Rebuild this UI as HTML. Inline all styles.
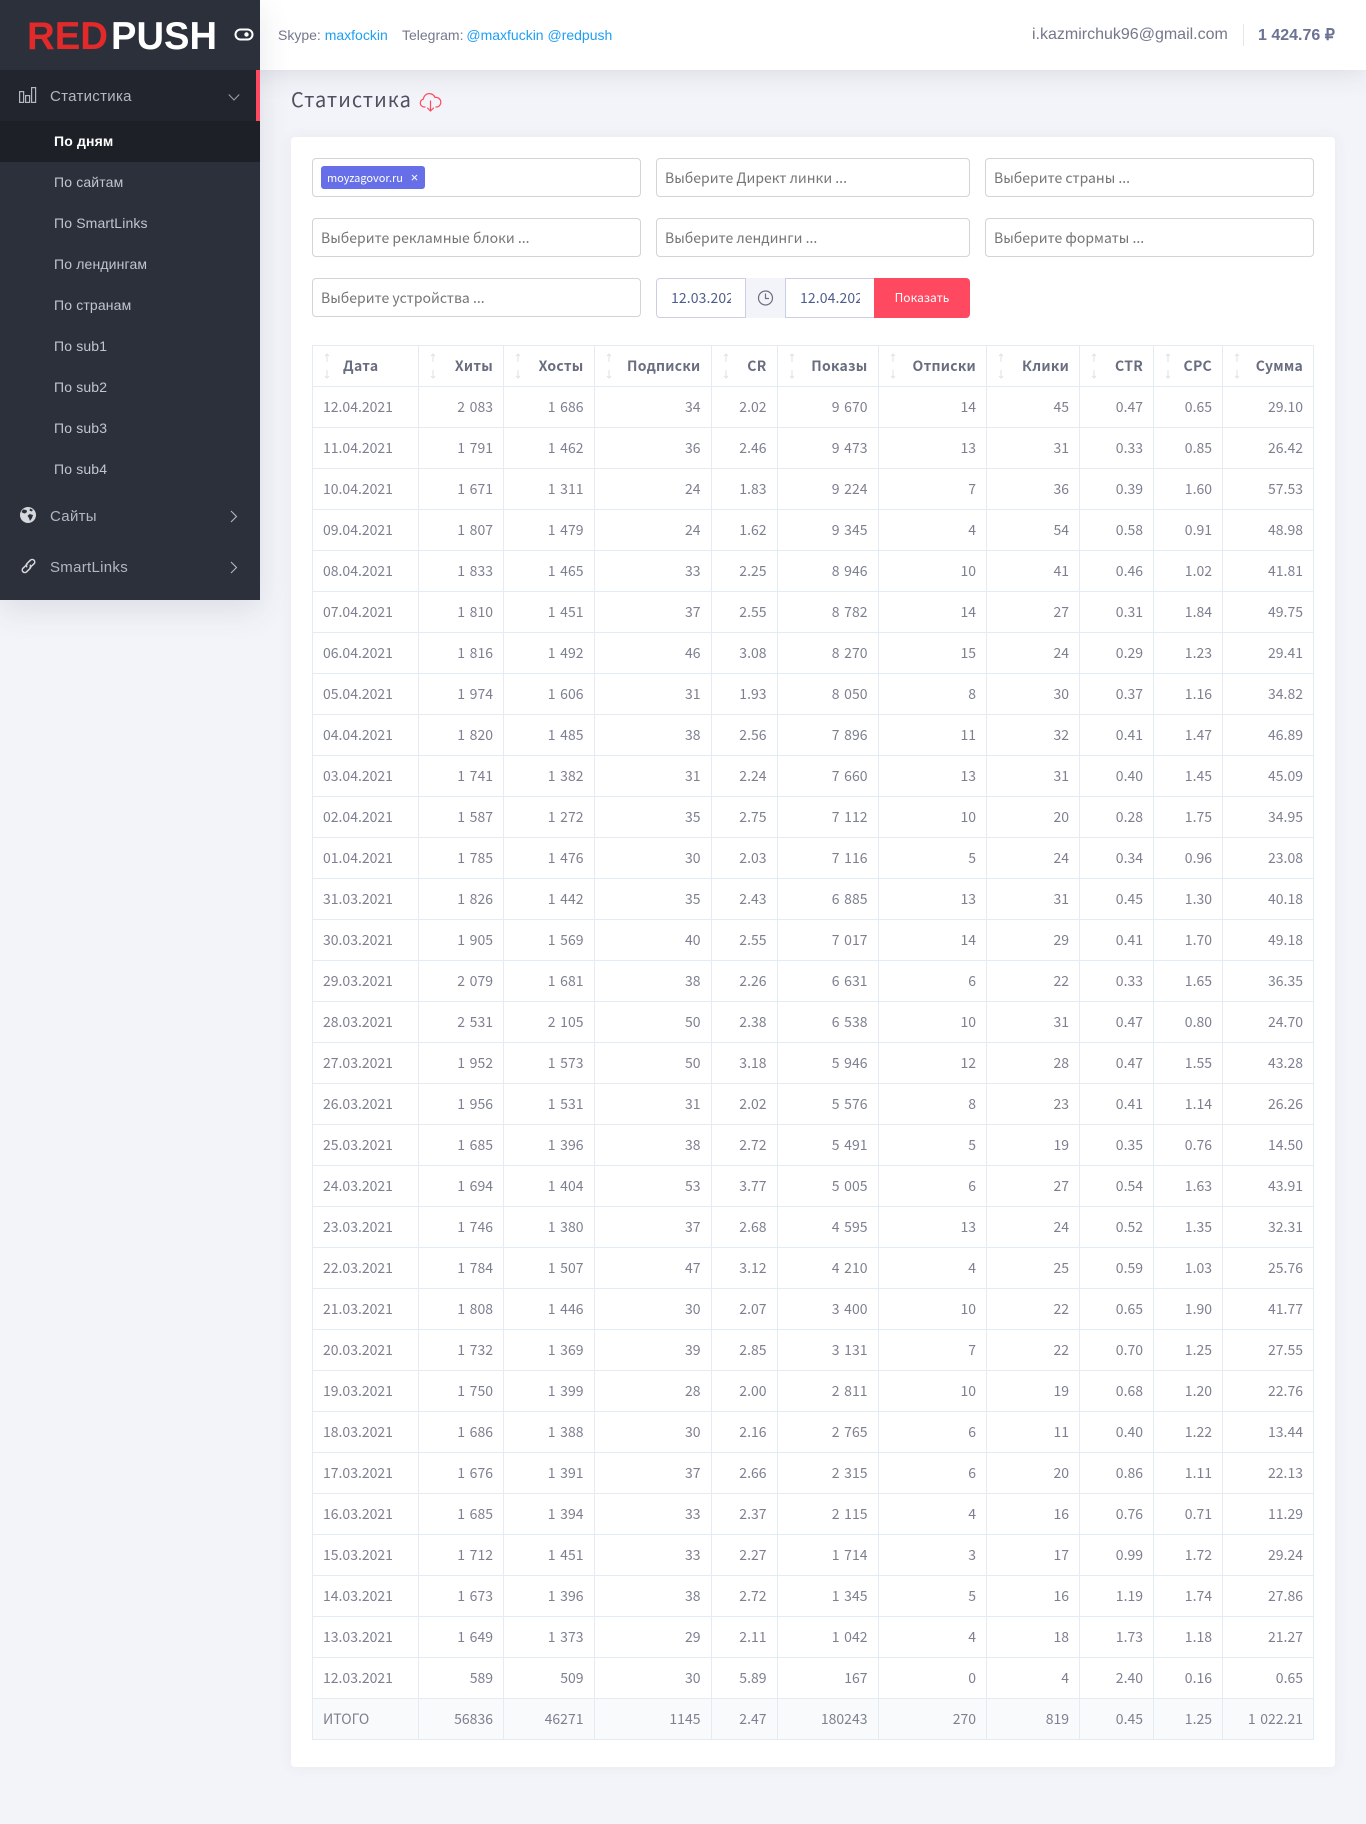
<!DOCTYPE html>
<html lang="ru"><head><meta charset="utf-8"><title>Статистика</title>
<style>
*{box-sizing:border-box}
html,body{margin:0;padding:0}
body{width:1366px;height:1824px;position:relative;overflow:hidden;background:#f3f4f9;font-family:"Liberation Sans",sans-serif}
.a{position:absolute;white-space:nowrap}
.top{left:0;top:0;width:1366px;height:70px;background:#fff;box-shadow:0 0 30px rgba(60,65,90,.16)}
.side{left:0;top:0;width:260px;height:600px;background:#2c303b;box-shadow:0 10px 30px rgba(60,65,90,.12)}
.sub{left:0;width:260px;height:41px;line-height:41px;padding-left:54px;font-size:14px;letter-spacing:.15px;color:#c2c5cc}
.main{left:50px;font-size:15px;letter-spacing:.3px;color:#b4b7c0;line-height:20px}
.card{left:291px;top:137px;width:1044px;height:1630px;background:#fff;border-radius:4px;box-shadow:0 0 15px rgba(60,65,90,.06)}
.n{font-family:"Noto Sans CJK JP","Liberation Sans",sans-serif}
.inp{height:39px;border:1px solid #d4d4d4;border-radius:4px;background:#fff;color:#757575;font-size:14px;line-height:39px;padding-left:8px;font-family:"Noto Sans CJK JP","Liberation Sans",sans-serif}
table{position:absolute;left:312px;top:345px;width:1001px;border-collapse:collapse;table-layout:fixed;font-family:"Noto Sans CJK JP","Liberation Sans",sans-serif;font-size:14px;color:#7d8090;word-spacing:1.5px}
th,td{border:1px solid #e3ebf3;height:41px;padding:0 10px 0 10px;text-align:right;white-space:nowrap;font-weight:400}
td:first-child{text-align:left}
th{position:relative;font-weight:700;color:#696d80;letter-spacing:.25px}
th:first-child{text-align:left;padding-left:30px}
th svg{position:absolute;left:10px;top:7px}
tr.t td{background:#f8fafc}
</style></head><body>
<div class="a top"></div>
<div class="a" style="left:278px;top:26px;font-size:14px;line-height:18px;color:#74788d">Skype: <span style="color:#1e9ff2">maxfockin</span></div>
<div class="a" style="left:402px;top:26px;font-size:14px;line-height:18px;color:#74788d">Telegram: <span style="color:#1e9ff2;margin-left:-1px">@maxfuckin @redpush</span></div>
<div class="a" style="left:1032px;top:26px;font-size:16px;line-height:18px;color:#74788d">i.kazmirchuk96@gmail.com</div>
<div class="a" style="left:1243px;top:24px;width:1px;height:22px;background:#e4e6ea"></div>
<div class="a" style="left:1258px;top:27px;font-size:16px;line-height:18px;font-weight:700;color:#6c7293">1 424.76 ₽</div>

<div class="a side"></div>
<svg class="a" style="left:0;top:0" width="260" height="70"><text x="27" y="49" font-family="Liberation Sans" font-weight="700" font-size="39" fill="#e22a2a" textLength="81" lengthAdjust="spacingAndGlyphs">RED</text><text x="111" y="49" font-family="Liberation Sans" font-weight="700" font-size="39" fill="#fff" textLength="106" lengthAdjust="spacingAndGlyphs">PUSH</text><rect x="235.5" y="29.5" width="17" height="10" rx="5" fill="none" stroke="#fff" stroke-width="2"/><circle cx="246.5" cy="34.5" r="2.2" fill="#fff"/></svg>
<div class="a" style="left:0;top:70px;width:260px;height:51px;background:#22252e"></div>
<div class="a" style="left:256px;top:70px;width:4px;height:51px;background:#ff4961"></div>
<svg class="a" style="left:19px;top:87px" width="18" height="16" fill="none" stroke="#b4b7c0" stroke-width="1.2"><rect x=".6" y="4.6" width="4" height="10.8"/><rect x="6.600" y="8.600" width="4" height="6.800"/><rect x="12.600" y=".6" width="4" height="14.800"/></svg>
<div class="a main" style="top:87px">Статистика</div>
<svg class="a" style="left:228px;top:93px" width="12" height="9" fill="none" stroke="#9a9da8" stroke-width="1.1"><path d="M.8 1.5 6 7l5.2-5.5"/></svg>
<div class="a" style="left:0;top:121px;width:260px;height:41px;background:#1e2028"></div>
<div class="a sub" style="top:121px;color:#fff;font-weight:700">По дням</div>
<div class="a sub" style="top:162px">По сайтам</div>
<div class="a sub" style="top:203px">По SmartLinks</div>
<div class="a sub" style="top:244px">По лендингам</div>
<div class="a sub" style="top:285px">По странам</div>
<div class="a sub" style="top:326px">По sub1</div>
<div class="a sub" style="top:367px">По sub2</div>
<div class="a sub" style="top:408px">По sub3</div>
<div class="a sub" style="top:449px">По sub4</div>
<svg class="a" style="left:20px;top:507px" width="16" height="16"><circle cx="8" cy="8" r="8" fill="#d6d8dd"/><path d="M3 2.500 6.500 3 7 5 5 6.500 3 6 1.500 5ZM9.500 7l3.500 1-1 3-2 3-1-3-1.500-2ZM10 1.500l3 1.500-1.500 1.500-2-1Z" fill="#2c303b"/></svg>
<div class="a main" style="top:507px">Сайты</div>
<svg class="a" style="left:230px;top:510px" width="8" height="13" fill="none" stroke="#b4b7c0" stroke-width="1.1"><path d="M1 1l5.500 5.500L1 12"/></svg>
<svg class="a" style="left:20px;top:558px" width="17" height="16" fill="none" stroke="#d6d8dd" stroke-width="1.5" stroke-linecap="round"><path d="M7 6.500 3 10.200a2.500 2.500 0 0 0 3.600 3.600L10 10.500a2.600 2.600 0 0 0 .3-3.200"/><path d="M10 9.500l4-3.700a2.500 2.500 0 0 0-3.600-3.600L7 5.500a2.600 2.600 0 0 0-.3 3.200"/></svg>
<div class="a main" style="top:558px">SmartLinks</div>
<svg class="a" style="left:230px;top:561px" width="8" height="13" fill="none" stroke="#b4b7c0" stroke-width="1.1"><path d="M1 1l5.500 5.500L1 12"/></svg>

<div class="a n" style="left:291px;top:85px;font-size:20px;line-height:28px;letter-spacing:1px;color:#4f5160">Статистика</div>
<svg class="a" style="left:419px;top:92px" width="23" height="20" fill="none" stroke="#ff4961" stroke-width="1.2" stroke-linecap="round" stroke-linejoin="round"><path d="M6 15H5a4 4 0 0 1-.6-7.900A6 6 0 0 1 16 5.500a4.800 4.800 0 0 1 2 9.500h-1"/><path d="M11.500 9v10M8.500 16l3 3 3-3"/></svg>

<div class="a card"></div>
<div class="a inp" style="left:312px;top:158px;width:329px"></div>
<div class="a n" style="left:321px;top:166px;width:104px;height:23px;background:#666ee8;border-radius:3px;color:#fff;font-size:11px;line-height:24px;padding-left:6px">moyzagovor.ru<span style="position:absolute;left:89px;top:0;font-size:9px;font-weight:700">×</span></div>
<div class="a inp" style="left:656px;top:158px;width:314px">Выберите Директ линки ...</div>
<div class="a inp" style="left:985px;top:158px;width:329px">Выберите страны ...</div>
<div class="a inp" style="left:312px;top:218px;width:329px">Выберите рекламные блоки ...</div>
<div class="a inp" style="left:656px;top:218px;width:314px">Выберите лендинги ...</div>
<div class="a inp" style="left:985px;top:218px;width:329px">Выберите форматы ...</div>
<div class="a inp" style="left:312px;top:278px;width:329px">Выберите устройства ...</div>
<div class="a" style="left:656px;top:278px;width:90px;height:40px;border:1px solid #cacfe7;border-radius:4px 0 0 4px;background:#fff"></div>
<div class="a n" style="left:671px;top:287px;width:60px;height:22px;overflow:hidden;font-size:14px;letter-spacing:.1px;line-height:22px;color:#4e5c8c">12.03.2021</div>
<div class="a" style="left:746px;top:278px;width:39px;height:40px;background:#f3f4f9;border-bottom:1px solid #f3f4f9"></div>
<svg class="a" style="left:757px;top:290px" width="17" height="17" fill="none" stroke="#6b6f82" stroke-width="1.200"><circle cx="8.500" cy="8" r="7"/><path d="M8.500 3.500V8.500H12"/></svg>
<div class="a" style="left:785px;top:278px;width:89px;height:40px;border:1px solid #cacfe7;border-right:0;background:#fff"></div>
<div class="a n" style="left:800px;top:287px;width:60px;height:22px;overflow:hidden;font-size:14px;letter-spacing:.1px;line-height:22px;color:#4e5c8c">12.04.2021</div>
<div class="a n" style="left:874px;top:278px;width:96px;height:40px;background:#ff4961;border-radius:0 4px 4px 0;color:#fff;font-size:12px;line-height:40px;text-align:center">Показать</div>

<table>
<colgroup><col style="width:106px"><col style="width:85px"><col style="width:90.500px"><col style="width:117px"><col style="width:66px"><col style="width:101px"><col style="width:108.500px"><col style="width:93px"><col style="width:74px"><col style="width:69px"><col style="width:91px"></colgroup>
<tr><th><svg width="8" height="26" fill="none" stroke="#dfe2e8"><path d="M4 9V1M2 3l2-2 2 2M4 17v8M2 23l2 2 2-2"/></svg>Дата<th><svg width="8" height="26" fill="none" stroke="#dfe2e8"><path d="M4 9V1M2 3l2-2 2 2M4 17v8M2 23l2 2 2-2"/></svg>Хиты<th><svg width="8" height="26" fill="none" stroke="#dfe2e8"><path d="M4 9V1M2 3l2-2 2 2M4 17v8M2 23l2 2 2-2"/></svg>Хосты<th><svg width="8" height="26" fill="none" stroke="#dfe2e8"><path d="M4 9V1M2 3l2-2 2 2M4 17v8M2 23l2 2 2-2"/></svg>Подписки<th><svg width="8" height="26" fill="none" stroke="#dfe2e8"><path d="M4 9V1M2 3l2-2 2 2M4 17v8M2 23l2 2 2-2"/></svg>CR<th><svg width="8" height="26" fill="none" stroke="#dfe2e8"><path d="M4 9V1M2 3l2-2 2 2M4 17v8M2 23l2 2 2-2"/></svg>Показы<th><svg width="8" height="26" fill="none" stroke="#dfe2e8"><path d="M4 9V1M2 3l2-2 2 2M4 17v8M2 23l2 2 2-2"/></svg>Отписки<th><svg width="8" height="26" fill="none" stroke="#dfe2e8"><path d="M4 9V1M2 3l2-2 2 2M4 17v8M2 23l2 2 2-2"/></svg>Клики<th><svg width="8" height="26" fill="none" stroke="#dfe2e8"><path d="M4 9V1M2 3l2-2 2 2M4 17v8M2 23l2 2 2-2"/></svg>CTR<th><svg width="8" height="26" fill="none" stroke="#dfe2e8"><path d="M4 9V1M2 3l2-2 2 2M4 17v8M2 23l2 2 2-2"/></svg>CPC<th><svg width="8" height="26" fill="none" stroke="#dfe2e8"><path d="M4 9V1M2 3l2-2 2 2M4 17v8M2 23l2 2 2-2"/></svg>Сумма
<tr><td>12.04.2021<td>2 083<td>1 686<td>34<td>2.02<td>9 670<td>14<td>45<td>0.47<td>0.65<td>29.10
<tr><td>11.04.2021<td>1 791<td>1 462<td>36<td>2.46<td>9 473<td>13<td>31<td>0.33<td>0.85<td>26.42
<tr><td>10.04.2021<td>1 671<td>1 311<td>24<td>1.83<td>9 224<td>7<td>36<td>0.39<td>1.60<td>57.53
<tr><td>09.04.2021<td>1 807<td>1 479<td>24<td>1.62<td>9 345<td>4<td>54<td>0.58<td>0.91<td>48.98
<tr><td>08.04.2021<td>1 833<td>1 465<td>33<td>2.25<td>8 946<td>10<td>41<td>0.46<td>1.02<td>41.81
<tr><td>07.04.2021<td>1 810<td>1 451<td>37<td>2.55<td>8 782<td>14<td>27<td>0.31<td>1.84<td>49.75
<tr><td>06.04.2021<td>1 816<td>1 492<td>46<td>3.08<td>8 270<td>15<td>24<td>0.29<td>1.23<td>29.41
<tr><td>05.04.2021<td>1 974<td>1 606<td>31<td>1.93<td>8 050<td>8<td>30<td>0.37<td>1.16<td>34.82
<tr><td>04.04.2021<td>1 820<td>1 485<td>38<td>2.56<td>7 896<td>11<td>32<td>0.41<td>1.47<td>46.89
<tr><td>03.04.2021<td>1 741<td>1 382<td>31<td>2.24<td>7 660<td>13<td>31<td>0.40<td>1.45<td>45.09
<tr><td>02.04.2021<td>1 587<td>1 272<td>35<td>2.75<td>7 112<td>10<td>20<td>0.28<td>1.75<td>34.95
<tr><td>01.04.2021<td>1 785<td>1 476<td>30<td>2.03<td>7 116<td>5<td>24<td>0.34<td>0.96<td>23.08
<tr><td>31.03.2021<td>1 826<td>1 442<td>35<td>2.43<td>6 885<td>13<td>31<td>0.45<td>1.30<td>40.18
<tr><td>30.03.2021<td>1 905<td>1 569<td>40<td>2.55<td>7 017<td>14<td>29<td>0.41<td>1.70<td>49.18
<tr><td>29.03.2021<td>2 079<td>1 681<td>38<td>2.26<td>6 631<td>6<td>22<td>0.33<td>1.65<td>36.35
<tr><td>28.03.2021<td>2 531<td>2 105<td>50<td>2.38<td>6 538<td>10<td>31<td>0.47<td>0.80<td>24.70
<tr><td>27.03.2021<td>1 952<td>1 573<td>50<td>3.18<td>5 946<td>12<td>28<td>0.47<td>1.55<td>43.28
<tr><td>26.03.2021<td>1 956<td>1 531<td>31<td>2.02<td>5 576<td>8<td>23<td>0.41<td>1.14<td>26.26
<tr><td>25.03.2021<td>1 685<td>1 396<td>38<td>2.72<td>5 491<td>5<td>19<td>0.35<td>0.76<td>14.50
<tr><td>24.03.2021<td>1 694<td>1 404<td>53<td>3.77<td>5 005<td>6<td>27<td>0.54<td>1.63<td>43.91
<tr><td>23.03.2021<td>1 746<td>1 380<td>37<td>2.68<td>4 595<td>13<td>24<td>0.52<td>1.35<td>32.31
<tr><td>22.03.2021<td>1 784<td>1 507<td>47<td>3.12<td>4 210<td>4<td>25<td>0.59<td>1.03<td>25.76
<tr><td>21.03.2021<td>1 808<td>1 446<td>30<td>2.07<td>3 400<td>10<td>22<td>0.65<td>1.90<td>41.77
<tr><td>20.03.2021<td>1 732<td>1 369<td>39<td>2.85<td>3 131<td>7<td>22<td>0.70<td>1.25<td>27.55
<tr><td>19.03.2021<td>1 750<td>1 399<td>28<td>2.00<td>2 811<td>10<td>19<td>0.68<td>1.20<td>22.76
<tr><td>18.03.2021<td>1 686<td>1 388<td>30<td>2.16<td>2 765<td>6<td>11<td>0.40<td>1.22<td>13.44
<tr><td>17.03.2021<td>1 676<td>1 391<td>37<td>2.66<td>2 315<td>6<td>20<td>0.86<td>1.11<td>22.13
<tr><td>16.03.2021<td>1 685<td>1 394<td>33<td>2.37<td>2 115<td>4<td>16<td>0.76<td>0.71<td>11.29
<tr><td>15.03.2021<td>1 712<td>1 451<td>33<td>2.27<td>1 714<td>3<td>17<td>0.99<td>1.72<td>29.24
<tr><td>14.03.2021<td>1 673<td>1 396<td>38<td>2.72<td>1 345<td>5<td>16<td>1.19<td>1.74<td>27.86
<tr><td>13.03.2021<td>1 649<td>1 373<td>29<td>2.11<td>1 042<td>4<td>18<td>1.73<td>1.18<td>21.27
<tr><td>12.03.2021<td>589<td>509<td>30<td>5.89<td>167<td>0<td>4<td>2.40<td>0.16<td>0.65
<tr class="t"><td>ИТОГО<td>56836<td>46271<td>1145<td>2.47<td>180243<td>270<td>819<td>0.45<td>1.25<td>1 022.21
</table>
</body></html>
